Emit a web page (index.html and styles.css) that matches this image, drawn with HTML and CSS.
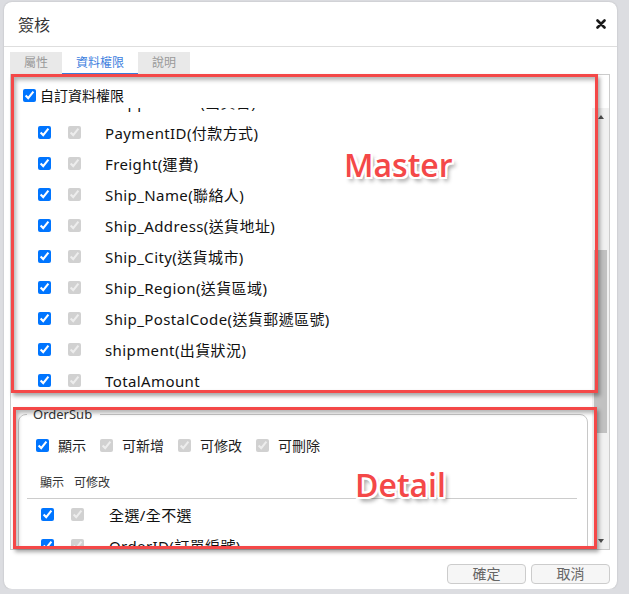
FILE: index.html
```html
<!DOCTYPE html>
<html lang="zh-Hant">
<head>
	<meta charset="UTF-8">
	<title>簽核</title>
	<link rel="stylesheet" href="styles.css">
</head>
<body>
	<div class="dialog">
		<header class="dlg-head">
			<span class="dlg-title">簽核</span>
			<span class="dlg-close">
				<svg width="10" height="10" viewBox="0 0 10 10"><path d="M1.5 1.5 L8.5 8.5 M8.5 1.5 L1.5 8.5" stroke="#1a1a1a" stroke-width="2.6" stroke-linecap="round"/></svg>
			</span>
		</header>
		<section class="dlg-body">
			<ul class="tabs">
				<li>屬性</li>
				<li class="active">資料權限</li>
				<li>說明</li>
			</ul>
			<div class="panel">
				<label class="custom"><input type="checkbox" checked>自訂資料權限</label>
				<div class="scroller">
					<div class="view">
						<div class="inner">
							<div class="master">
								<div class="row"><input type="checkbox" checked><input type="checkbox" checked disabled><span>ShippedDate(出貨日)</span></div>
								<div class="row"><input type="checkbox" checked><input type="checkbox" checked disabled><span>PaymentID(付款方式)</span></div>
								<div class="row"><input type="checkbox" checked><input type="checkbox" checked disabled><span>Freight(運費)</span></div>
								<div class="row"><input type="checkbox" checked><input type="checkbox" checked disabled><span>Ship_Name(聯絡人)</span></div>
								<div class="row"><input type="checkbox" checked><input type="checkbox" checked disabled><span>Ship_Address(送貨地址)</span></div>
								<div class="row"><input type="checkbox" checked><input type="checkbox" checked disabled><span>Ship_City(送貨城市)</span></div>
								<div class="row"><input type="checkbox" checked><input type="checkbox" checked disabled><span>Ship_Region(送貨區域)</span></div>
								<div class="row"><input type="checkbox" checked><input type="checkbox" checked disabled><span>Ship_PostalCode(送貨郵遞區號)</span></div>
								<div class="row"><input type="checkbox" checked><input type="checkbox" checked disabled><span>shipment(出貨狀況)</span></div>
								<div class="row"><input type="checkbox" checked><input type="checkbox" checked disabled><span>TotalAmount</span></div>
							</div>
							<fieldset class="detail">
								<legend>OrderSub</legend>
								<div class="flags">
									<label><input type="checkbox" checked>顯示</label>
									<label><input type="checkbox" checked disabled>可新增</label>
									<label><input type="checkbox" checked disabled>可修改</label>
									<label><input type="checkbox" checked disabled>可刪除</label>
								</div>
								<div class="dhead"><span>顯示</span><span>可修改</span></div>
								<div class="drow"><input type="checkbox" checked><input type="checkbox" checked disabled><span>全選/全不選</span></div>
								<div class="drow"><input type="checkbox" checked><input type="checkbox" checked disabled><span>OrderID(訂單編號)</span></div>
								<div class="drow"><input type="checkbox" checked><input type="checkbox" checked disabled><span>ProductID(產品編號)</span></div>
								<div class="drow"><input type="checkbox" checked><input type="checkbox" checked disabled><span>Quantity(數量)</span></div>
							</fieldset>
						</div>
					</div>
					<div class="vbar">
						<span class="btn up"></span>
						<div class="track"><span class="thumb"></span></div>
						<span class="btn down"></span>
					</div>
				</div>
			</div>
		</section>
		<footer class="dlg-foot">
			<button>確定</button>
			<button>取消</button>
		</footer>

		<div class="mark mark-master"><span>Master</span></div>
		<div class="mark mark-detail"><span>Detail</span></div>
	</div>
</body>
</html>
```

FILE: styles.css
```css
* {
	box-sizing: border-box;
}
body {
	margin: 0;
	background: #dcdde1;
	font-family: "Noto Sans", "Noto Sans CJK TC", sans-serif;
	color: #222;
}
/* dialog */
.dialog {
	position: relative;
	width: 613px;
	height: 587px;
	margin: 2px 0 0 4px;
	background: #fff;
	border-radius: 8px;
	box-shadow: 0 0 2px rgba(0,0,0,.18);
	display: flex;
	flex-direction: column;
}
.dlg-head {
	display: flex;
	align-items: center;
	justify-content: space-between;
	height: 45px;
	padding: 0 11px 0 14px;
	border-bottom: 1px solid #dedede;
}
.dlg-title {
	font-size: 16px;
	color: #333;
}
.dlg-close svg {
	display: block;
}
.dlg-body {
	padding: 5px 7px 0 6px;
}
/* tabs */
.tabs {
	display: flex;
	width: max-content;
	height: 22px;
	margin: 0;
	padding: 0;
	list-style: none;
	background: #e9e9e9;
}
.tabs li {
	padding: 0 14px;
	font-size: 12px;
	line-height: 21px;
	color: #999;
}
.tabs li.active {
	background: #fff;
	color: #3d7ede;
	border-bottom: 1px solid #3d7ede;
}
.panel {
	border: 1px solid #ccc;
}
.panel input {
	width: 13px;
	height: 13px;
	margin: 0;
}
.custom {
	display: flex;
	align-items: center;
	height: 33px;
	padding: 7px 0 0 12px;
	font-size: 14px;
	color: #111;
}
.custom input {
	margin-right: 4px;
}
/* scroll area */
.scroller {
	display: flex;
	height: 441px;
}
.view {
	flex: 1;
	overflow: hidden;
}
.inner {
	margin-top: -22px;
}
.row {
	display: flex;
	align-items: center;
	height: 31px;
	padding-left: 27px;
	font-size: 15px;
	color: #111;
}
.row input + input {
	margin-left: 17px;
}
.row span {
	margin-left: 24px;
	letter-spacing: .4px;
}
/* detail fieldset */
fieldset.detail {
	margin: 9px 4px 0 7px;
	padding: 6px 10px 12px 8px;
	border: 1px solid #c8c8c8;
	border-radius: 8px;
	min-width: 0;
}
fieldset.detail legend {
	padding: 0 8px 0 6px;
	font-size: 13px;
	line-height: 18px;
	color: #333;
}
.flags {
	display: flex;
	align-items: center;
	gap: 14px;
	height: 32px;
	padding-left: 9px;
	font-size: 14px;
}
.flags label {
	display: flex;
	align-items: center;
}
.flags input {
	margin-right: 9px;
}
.dhead {
	display: flex;
	align-items: flex-end;
	gap: 10px;
	height: 38px;
	padding: 0 0 7px 13px;
	font-size: 12px;
	line-height: 16px;
	color: #333;
	border-bottom: 1px solid #ccc;
}
.drow {
	display: flex;
	align-items: center;
	height: 31px;
	padding-left: 14px;
	font-size: 15px;
	color: #111;
}
.drow input + input {
	margin-left: 17px;
}
.drow span {
	margin-left: 25px;
	letter-spacing: .4px;
}
/* scrollbar */
.vbar {
	display: flex;
	flex-direction: column;
	width: 17px;
	background: #f1f1f1;
}
.vbar .btn {
	display: flex;
	align-items: center;
	justify-content: center;
	height: 17px;
}
.vbar .btn::before {
	content: '';
	border-left: 3.5px solid transparent;
	border-right: 3.5px solid transparent;
}
.vbar .up::before {
	border-bottom: 4px solid #505050;
}
.vbar .down::before {
	border-top: 4px solid #505050;
}
.vbar .track {
	flex: 1;
	padding: 0 2px;
}
.vbar .thumb {
	display: block;
	height: 183px;
	margin-top: 125px;
	background: #c1c1c1;
}
/* footer */
.dlg-foot {
	display: flex;
	justify-content: flex-end;
	gap: 5px;
	padding: 14px 7px 0 0;
}
.dlg-foot button {
	width: 79px;
	height: 20px;
	padding: 0;
	border: 1px solid #ccc;
	border-radius: 4px;
	background: #f6f6f6;
	font: 14px/18px "Noto Sans", "Noto Sans CJK TC", sans-serif;
	color: #666;
}
/* annotations */
.mark {
	position: absolute;
	border: 3px solid #f44848;
	box-shadow: 2px 3px 4px rgba(0,0,0,.35), inset 2px 3px 4px rgba(0,0,0,.3);
}
.mark-master {
	left: 7px;
	top: 72px;
	width: 587px;
	height: 319px;
}
.mark-detail {
	left: 9px;
	top: 405px;
	width: 584px;
	height: 142px;
}
.mark span {
	position: absolute;
	font: 600 32px/40px "Open Sans", sans-serif;
	color: #f44848;
	text-shadow: -2px 0 #fff, 2px 0 #fff, 0 -2px #fff, 0 2px #fff,
		-2px -2px #fff, 2px 2px #fff, -2px 2px #fff, 2px -2px #fff,
		3px 4px 4px rgba(0,0,0,.45);
}
.mark-master span {
	left: 330px;
	top: 68px;
}
.mark-detail span {
	left: 339px;
	top: 55px;
}
```
